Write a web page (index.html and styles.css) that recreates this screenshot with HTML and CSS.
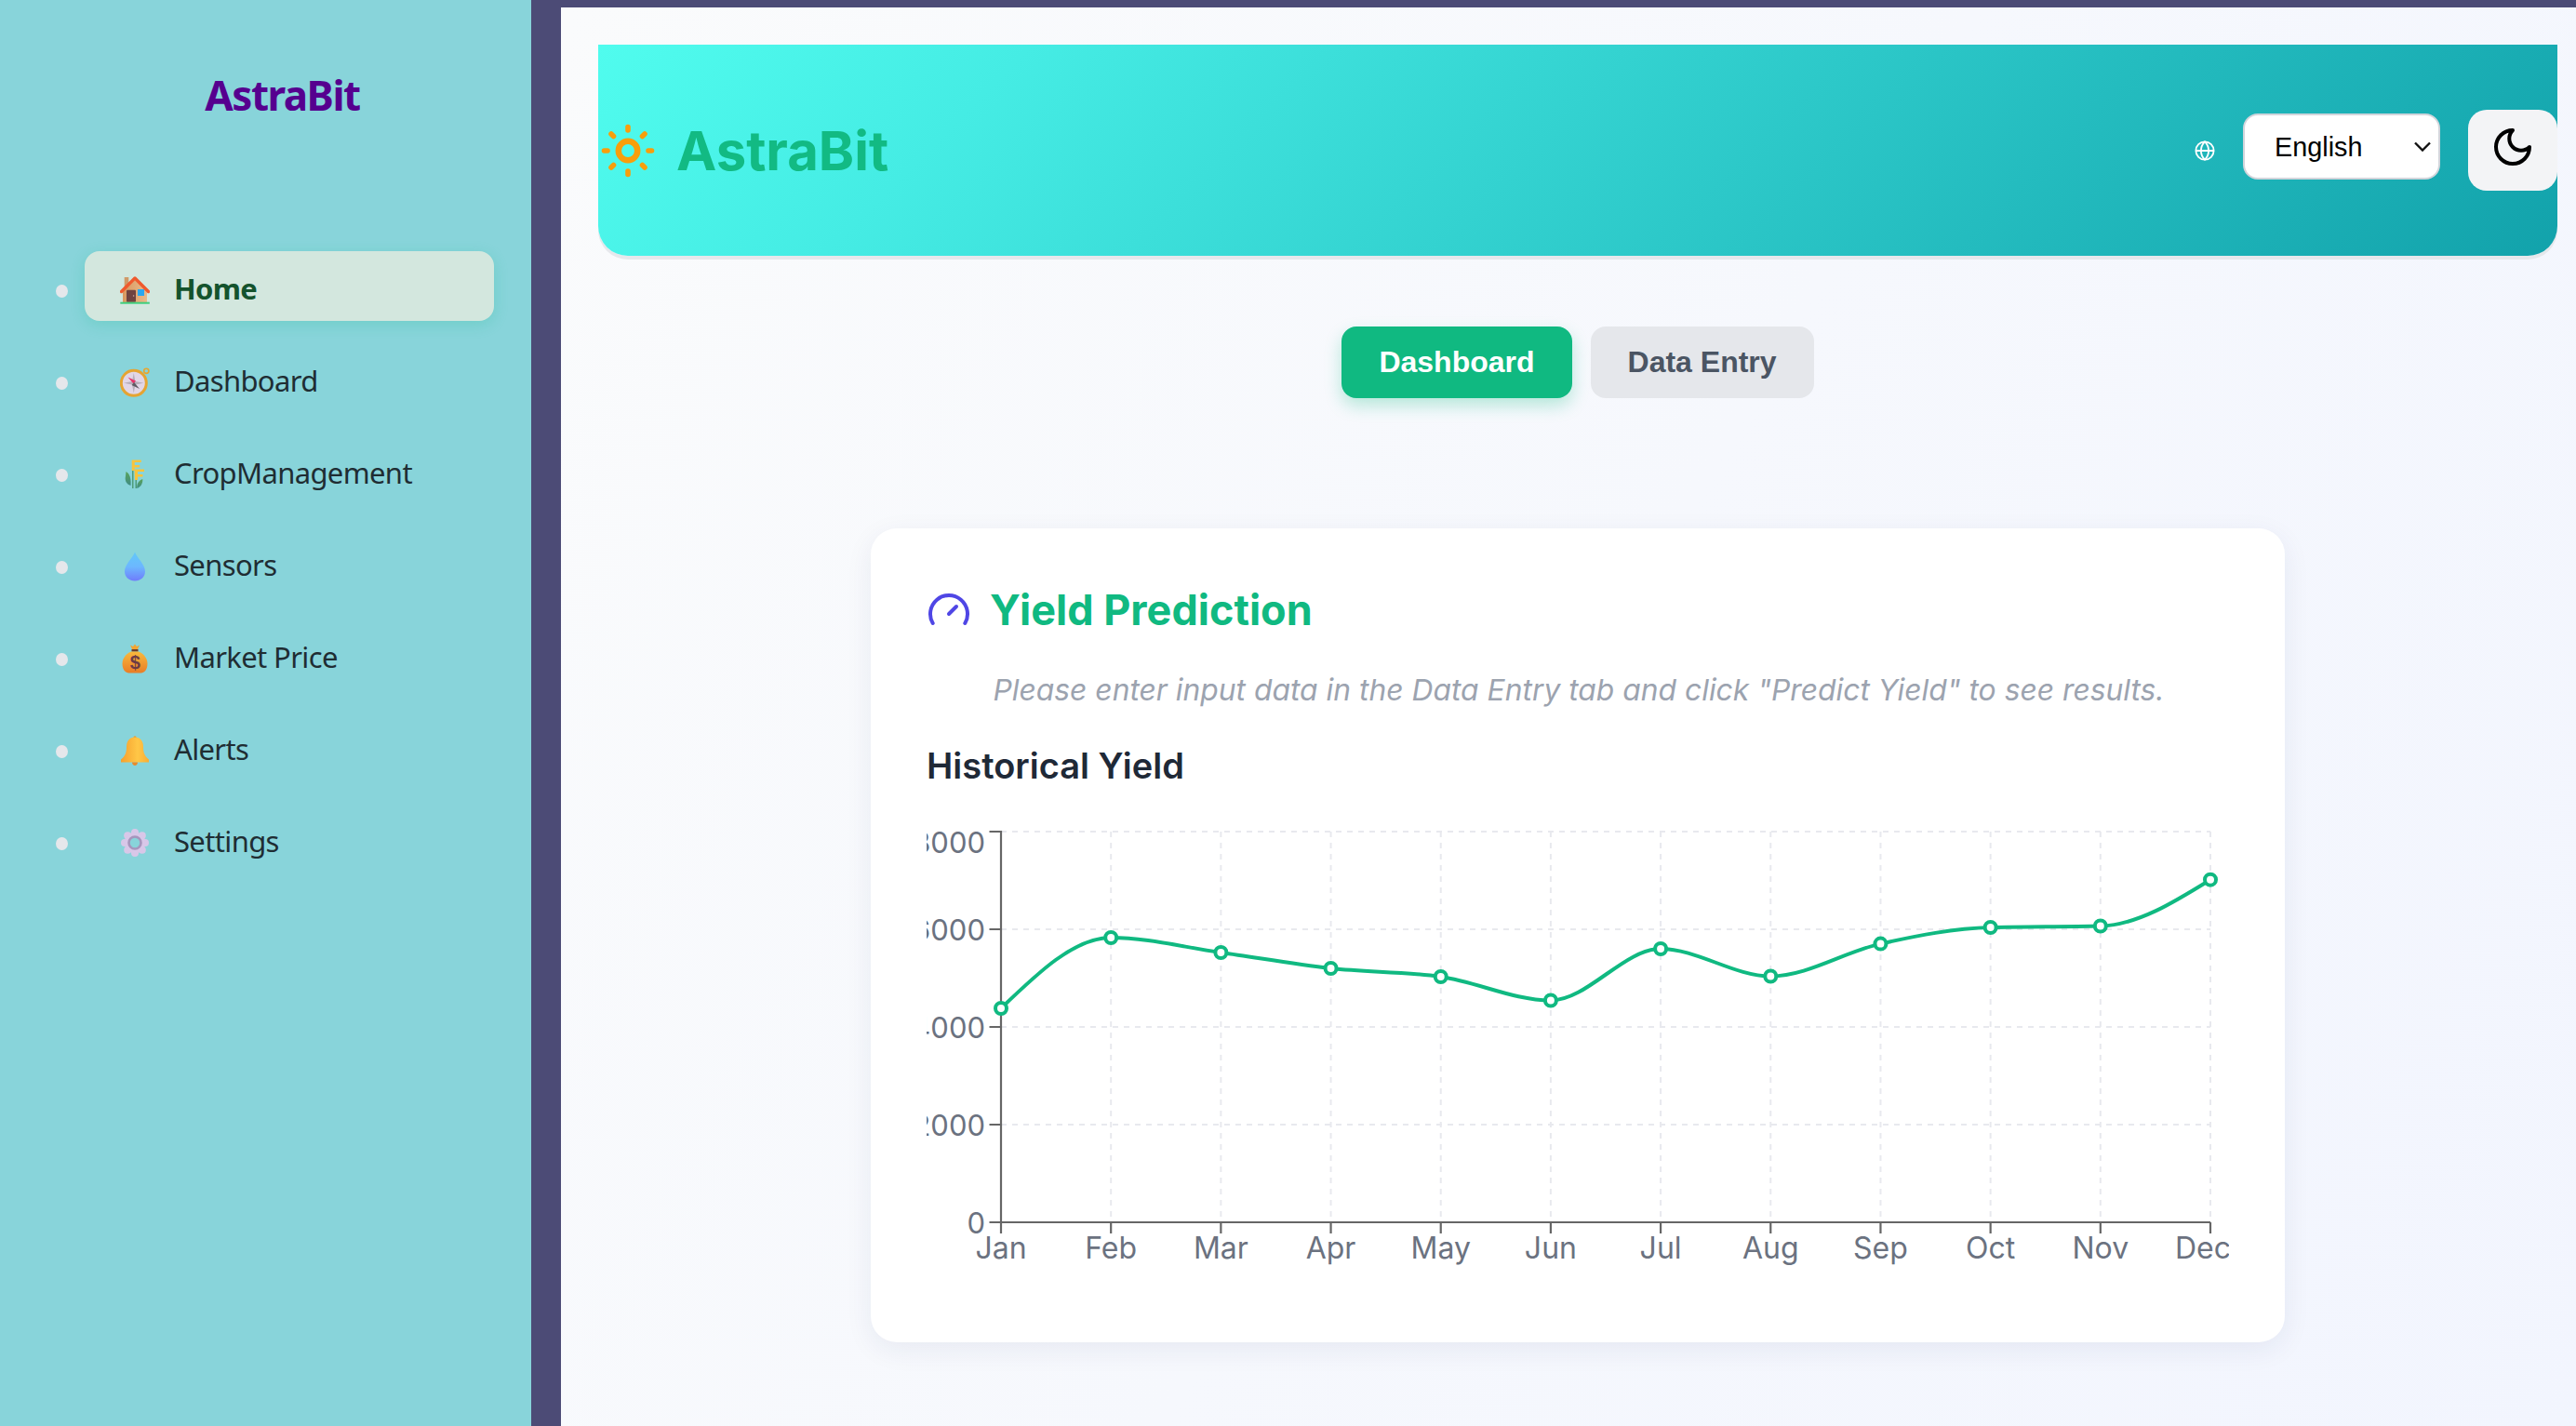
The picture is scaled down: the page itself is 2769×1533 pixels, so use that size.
FILE: index.html
```html
<!DOCTYPE html>
<html lang="en">
<head>
<meta charset="utf-8">
<title>AstraBit</title>
<link rel="stylesheet" href="styles.css">
</head>
<body>
<aside class="sidebar">
  <h2 class="brand">AstraBit</h2>
  <ul class="nav">
    <li class="nav-row"><span class="dot"></span><a class="nav-item active">
      <svg class="emoji" viewBox="0 0 32 32"><defs><linearGradient id="hb" x1="0" y1="0" x2="1" y2="0"><stop offset="0" stop-color="#d9985f"/><stop offset="1" stop-color="#e9b98a"/></linearGradient></defs><rect x="4.7" y="2" width="4.6" height="12" fill="#d09a68"/><path d="M3 17 16 5l13 12v12H3z" fill="url(#hb)"/><path d="M1.5 17.5 16 3l14.500 14.500" fill="none" stroke="#ef5a2e" stroke-width="3.400" stroke-linecap="round" stroke-linejoin="round"/><rect x="7" y="15.700" width="10" height="13" rx="1" fill="#6f4340"/><circle cx="14.600" cy="22" r=".8" fill="#caa"/><rect x="19" y="15" width="7" height="7" fill="#2aa7f0"/><rect x=".3" y="28.700" width="31.500" height="2" fill="#3fcf7c"/></svg>
      <span>Home</span></a></li>
    <li class="nav-row"><span class="dot"></span><a class="nav-item">
      <svg class="emoji" viewBox="0 0 32 32"><circle cx="28.300" cy="3.800" r="2.600" fill="none" stroke="#e8a62f" stroke-width="1.600"/><circle cx="14.800" cy="16.800" r="13.500" fill="#e2d6e6" stroke="#e5a432" stroke-width="3"/><path d="M14.800 6l1.600 9 9 1.800-9 1.600-1.600 9-1.800-9-9-1.600 9-1.800z" fill="#b7adb9"/><path d="M8.500 10.500 17 14.500l-2.500 3z" fill="#e8336a"/><path d="M21 23 12.600 19l2.600-3z" fill="#5f5a63"/></svg>
      <span>Dashboard</span></a></li>
    <li class="nav-row"><span class="dot"></span><a class="nav-item">
      <svg class="emoji" viewBox="0 0 32 32"><defs><linearGradient id="lf" x1="0" y1="0" x2="0" y2="1"><stop offset="0" stop-color="#5aa35a"/><stop offset="1" stop-color="#3f8c86"/></linearGradient></defs><path d="M6.500 13c3.500 2 5.500 6 5 15-3.500-1-6-4-5.800-8z" fill="url(#lf)"/><path d="M24.300 21c.3 4-1.500 8.500-6 10-.500-4 1-8 6-10z" fill="url(#lf)"/><path d="M13 8v23h1.500V8zM16.500 18v13H18V18z" fill="#4f9c7a"/><g fill="#f8c43c"><path d="M12.700.6h10v2.400h-7v3h5.500v2.400h-5.500v3.500h-3z"/><path d="M15.500 10.600h10.500v2.400h-7v3h5.500v2.400h-5.500v3.500h-3z"/></g></svg>
      <span>CropManagement</span></a></li>
    <li class="nav-row"><span class="dot"></span><a class="nav-item">
      <svg class="emoji" viewBox="0 0 32 32"><defs><linearGradient id="dr" x1="0" y1="0" x2="0" y2="1"><stop offset="0" stop-color="#62c8f8"/><stop offset=".5" stop-color="#6cb8ff"/><stop offset="1" stop-color="#6f7cfb"/></linearGradient></defs><path d="M16 .5C18.500 7 27 14 27 21.200c0 6-5 10.300-11 10.300S5 27.200 5 21.200C5 14 13.500 7 16 .5z" fill="url(#dr)"/></svg>
      <span>Sensors</span></a></li>
    <li class="nav-row"><span class="dot"></span><a class="nav-item">
      <svg class="emoji" viewBox="0 0 32 32"><defs><linearGradient id="bg" x1="0" y1="0" x2="0" y2="1"><stop offset="0" stop-color="#f9b93c"/><stop offset="1" stop-color="#e97d26"/></linearGradient></defs><path d="M11 1.500 14 3l2-2.500L18 3l3-1.500-2.500 5.500h-5z" fill="#f2a531"/><rect x="12.500" y="6" width="7" height="2.600" fill="#6b3d2d"/><path d="M12 8.500h8c6 2.500 9.500 7.500 9.500 13 0 6.500-3.500 10-7 10h-13c-3.500 0-7-3.500-7-10 0-5.500 3.500-10.500 9.500-13z" fill="url(#bg)"/><text class="bag-sign" x="16" y="27" text-anchor="middle">$</text></svg>
      <span>Market Price</span></a></li>
    <li class="nav-row"><span class="dot"></span><a class="nav-item">
      <svg class="emoji" viewBox="0 0 32 32"><defs><linearGradient id="bl" x1="0" y1="0" x2="1" y2="0"><stop offset="0" stop-color="#f59f2d"/><stop offset=".6" stop-color="#ffc747"/><stop offset="1" stop-color="#f8ad35"/></linearGradient></defs><circle cx="16" cy="1.800" r="1.500" fill="#e8962c"/><path d="M16 1.500c6 0 9 4.500 9 10.500 0 7 2 10 6 13.500v3H1v-3C5 22 7 19 7 12 7 6 10 1.500 16 1.500z" fill="url(#bl)"/><path d="M13 28.500h6c0 2-1.500 3.500-3 3.500s-3-1.500-3-3.500z" fill="#ea8a2a"/></svg>
      <span>Alerts</span></a></li>
    <li class="nav-row"><span class="dot"></span><a class="nav-item">
      <svg class="emoji" viewBox="0 0 32 32"><g fill="#d8c7e8"><circle cx="16" cy="5" r="4"/><circle cx="16" cy="27" r="4"/><circle cx="5" cy="16" r="4"/><circle cx="27" cy="16" r="4"/><circle cx="8.200" cy="8.200" r="4"/><circle cx="23.800" cy="8.200" r="4"/><circle cx="8.200" cy="23.800" r="4"/><circle cx="23.800" cy="23.800" r="4"/></g><circle cx="16" cy="16" r="8.800" fill="none" stroke="#d8c7e8" stroke-width="5"/><circle cx="16" cy="16" r="6.500" fill="none" stroke="#a696bd" stroke-width="2.600"/></svg>
      <span>Settings</span></a></li>
  </ul>
</aside>
<main class="main">
  <header class="topbar">
    <div class="topbar-brand">
      <svg class="sun" viewBox="0 0 58 58" fill="none" stroke="#f89e0b" stroke-linecap="round"><circle cx="29" cy="29" r="10.200" stroke-width="6.500"/><path stroke-width="5.600" d="M29 3.500V7M29 51v3.500M3.500 29H7M51 29h3.500M11 11l2.500 2.500M44.500 44.500 47 47M11 47l2.500-2.500M44.500 13.500 47 11"/></svg>
      <h1 class="topbar-title">AstraBit</h1>
    </div>
    <div class="topbar-tools">
      <svg class="globe" viewBox="0 0 24 24" fill="none" stroke="#fff" stroke-width="2"><circle cx="12" cy="12" r="10.500"/><path d="M12 1.500c-6 6-6 15 0 21 6-6 6-15 0-21zM1.500 12h21"/></svg>
      <select class="lang"><option>English</option></select>
      <button class="theme-btn" type="button"><svg class="moon" viewBox="0 0 24 24" fill="none" stroke="#000" stroke-width="2" stroke-linecap="round" stroke-linejoin="round"><path d="M12 3a6 6 0 0 0 9 9 9 9 0 1 1-9-9Z"/></svg></button>
    </div>
  </header>
  <div class="tabs">
    <button class="tab tab-on" type="button">Dashboard</button>
    <button class="tab tab-off" type="button">Data Entry</button>
  </div>
  <section class="card">
    <div class="card-head">
      <svg class="gauge" viewBox="0 0 24 24" fill="none" stroke="#4f46e5" stroke-width="2" stroke-linecap="round" stroke-linejoin="round"><path d="m12 14 4-4"/><path d="M3.340 19a10 10 0 1 1 17.320 0"/></svg>
      <h2 class="card-title">Yield Prediction</h2>
    </div>
    <p class="hint">Please enter input data in the Data Entry tab and click "Predict Yield" to see results.</p>
    <h3 class="chart-title">Historical Yield</h3>
    <svg class="chart" viewBox="996 880 1400 500">
      <g class="grid">
        <path d="M1076 894H2376M1076 999H2376M1076 1104H2376M1076 1209H2376"/>
        <path d="M1194.180 894V1314M1312.360 894V1314M1430.550 894V1314M1548.730 894V1314M1666.910 894V1314M1785.090 894V1314M1903.270 894V1314M2021.450 894V1314M2139.640 894V1314M2257.820 894V1314M2376 894V1314"/>
      </g>
      <path class="axis" d="M1076 893V1314H2376M1063.500 894H1076M1063.500 999H1076M1063.500 1104H1076M1063.500 1209H1076M1063.500 1314H1076M1076 1314V1326M1194.180 1314V1326M1312.360 1314V1326M1430.550 1314V1326M1548.730 1314V1326M1666.910 1314V1326M1785.090 1314V1326M1903.270 1314V1326M2021.450 1314V1326M2139.640 1314V1326M2257.820 1314V1326M2376 1314V1326"/>
      <g class="tick-y">
        <text x="1059" y="916.500">8000</text>
        <text x="1059" y="1010.500">6000</text>
        <text x="1059" y="1115.500">4000</text>
        <text x="1059" y="1220.500">2000</text>
        <text x="1059" y="1325.500">0</text>
      </g>
      <g class="tick-x">
        <text x="1076" y="1352.500">Jan</text><text x="1194.180" y="1352.500">Feb</text><text x="1312.360" y="1352.500">Mar</text><text x="1430.550" y="1352.500">Apr</text><text x="1548.730" y="1352.500">May</text><text x="1666.910" y="1352.500">Jun</text><text x="1785.090" y="1352.500">Jul</text><text x="1903.270" y="1352.500">Aug</text><text x="2021.450" y="1352.500">Sep</text><text x="2139.640" y="1352.500">Oct</text><text x="2257.820" y="1352.500">Nov</text><text x="2368" y="1352.500">Dec</text>
      </g>
      <path class="line" d="M1076 1084C1115.390 1046 1154.790 1008 1194.180 1008C1233.570 1008 1272.970 1018.500 1312.360 1024C1351.750 1029.500 1391.160 1036.670 1430.550 1041C1469.940 1045.330 1509.340 1044.250 1548.730 1050C1588.120 1055.750 1627.520 1075.500 1666.910 1075.500C1706.300 1075.500 1745.700 1020 1785.090 1020C1824.480 1020 1863.880 1049.500 1903.270 1049.500C1942.660 1049.500 1982.060 1023.350 2021.450 1014.600C2060.840 1005.850 2100.250 998 2139.640 997C2179.030 996 2218.430 996.500 2257.820 995.500C2297.210 994.500 2336.610 970.100 2376 945.700"/>
      <g class="points">
        <circle cx="1076" cy="1084" r="6"/><circle cx="1194.180" cy="1008" r="6"/><circle cx="1312.360" cy="1024" r="6"/><circle cx="1430.550" cy="1041" r="6"/><circle cx="1548.730" cy="1050" r="6"/><circle cx="1666.910" cy="1075.500" r="6"/><circle cx="1785.090" cy="1020" r="6"/><circle cx="1903.270" cy="1049.500" r="6"/><circle cx="2021.450" cy="1014.600" r="6"/><circle cx="2139.640" cy="997" r="6"/><circle cx="2257.820" cy="995.500" r="6"/><circle cx="2376" cy="945.700" r="6"/>
      </g>
    </svg>
  </section>
</main>
</body>
</html>
```
FILE: styles.css
```css
* { box-sizing: border-box; }
html, body { height: 100%; }
body {
  margin: 0;
  display: flex;
  overflow: hidden;
  background: #4c4b76;
  font-family: "Inter", "Liberation Sans", sans-serif;
}
.sidebar {
  width: 571px;
  flex: none;
  background: #88d4da;
  font-family: "Noto Sans", "Open Sans", sans-serif;
}
.brand {
  margin: 68px 0 0;
  height: 68px;
  line-height: 68px;
  text-align: center;
  font-size: 44px;
  font-weight: 700;
  letter-spacing: -1.5px;
  color: #56008f;
  padding-left: 36px;
}
.nav {
  list-style: none;
  margin: 134px 0 0;
  padding: 0 40px 0 60px;
}
.nav-row {
  display: flex;
  height: 99px;
  align-items: flex-start;
}
.dot {
  width: 13px;
  height: 14px;
  margin-top: 36px;
  margin-right: 18px;
  border-radius: 50%;
  background: #e5e7eb;
  flex: none;
}
.nav-item {
  flex: 1;
  height: 75px;
  padding: 5px 0 0 38px;
  display: flex;
  align-items: center;
  gap: 26px;
  border-radius: 16px;
  font-size: 31px;
  letter-spacing: -.65px;
  color: #1f2d33;
}
.nav-item.active {
  background: #d3e7de;
  color: #14532d;
  font-weight: 700;
  box-shadow: 0 4px 16px rgba(16, 185, 129, .2);
}
.emoji { width: 32px; height: 32px; flex: none; position: relative; top: 1.5px; }
.bag-sign { font: 700 20px "Liberation Sans", sans-serif; fill: #6d3b45; }
.main {
  flex: 1;
  margin: 8px 0 0 32px;
  padding: 40px 20px 0 40px;
  background: linear-gradient(120deg, #fafbfc, #f2f5fe);
  min-width: 0;
}
.topbar {
  height: 227px;
  display: flex;
  align-items: center;
  justify-content: space-between;
  padding-left: 3px;
  border-radius: 0 0 32px 32px;
  background: linear-gradient(135deg, #50fcee 0%, #45ece4 20%, #12a2ab 100%);
  box-shadow: 0 4px 0 #e6e8ec;
}
.topbar-brand { display: flex; align-items: center; gap: 23px; }
.sun { width: 58px; height: 58px; flex: none; }
.topbar-title { margin: 0; font-size: 58px; font-weight: 700; color: #12ba83; }
.topbar-tools { display: flex; align-items: center; }
.globe { width: 22px; height: 22px; margin-right: 30px; }
.lang {
  appearance: none;
  width: 212px;
  height: 71px;
  margin: 0 30px 8px 0;
  padding: 0 40px 0 32px;
  border: 2px solid #d1d5db;
  border-radius: 16px;
  background: #fff url("data:image/svg+xml,%3Csvg xmlns='http://www.w3.org/2000/svg' width='18' height='11' fill='none' stroke='%23111' stroke-width='2.400'%3E%3Cpath d='M1 1.500l8 8 8-8'/%3E%3C/svg%3E") no-repeat right 8px center;
  font: 28.8px "Liberation Sans", Arial, sans-serif;
  color: #000;
}
.theme-btn {
  width: 96px;
  height: 87px;
  padding: 0 24px 7px;
  display: block;
  border: 0;
  border-radius: 20px;
  background: #f3f4f6;
}
.moon { width: 48px; height: 48px; display: block; }
.tabs { display: flex; justify-content: center; gap: 20px; margin-top: 76px; }
.tab {
  height: 77px;
  padding: 0 40px;
  border: 0;
  border-radius: 16px;
  font: 700 32px "Liberation Sans", Arial, sans-serif;
}
.tab-on { background: #10b981; color: #fff; box-shadow: 0 8px 18px rgba(16, 185, 129, .28); }
.tab-off { background: #e5e7eb; color: #4b5563; }
.card {
  width: 1520px;
  height: 875px;
  margin: 140px auto 0;
  padding: 60px 60px 63px;
  border-radius: 28px;
  background: #fff;
  box-shadow: 0 8px 30px rgba(31, 41, 100, .07);
}
.card-head { display: flex; align-items: center; height: 54px; gap: 20px; }
.gauge { width: 48px; height: 48px; flex: none; margin-top: 2px; }
.card-title { margin: 0; font-size: 45px; font-weight: 700; color: #10b981; }
.hint {
  margin: 36px 0 0;
  padding-left: 2px;
  height: 48px;
  line-height: 48px;
  text-align: center;
  font-size: 31.8px;
  font-style: italic;
  color: #9ca3af;
}
.chart-title { margin: 33px 0 0; height: 48px; line-height: 48px; font-size: 38px; font-weight: 600; color: #1f2937; }
.chart { display: block; width: 1400px; height: 500px; margin-top: 33px; }
.grid path { fill: none; stroke: #e8e9ee; stroke-width: 2; stroke-dasharray: 6 6; }
.axis { fill: none; stroke: #666; stroke-width: 2.200; }
.tick-y text { font-size: 31px; fill: #6b7280; text-anchor: end; }
.tick-x text { font-size: 32px; fill: #6b7280; text-anchor: middle; }
.line { fill: none; stroke: #10b981; stroke-width: 4; }
.points circle { fill: #fff; stroke: #10b981; stroke-width: 4; }
```
